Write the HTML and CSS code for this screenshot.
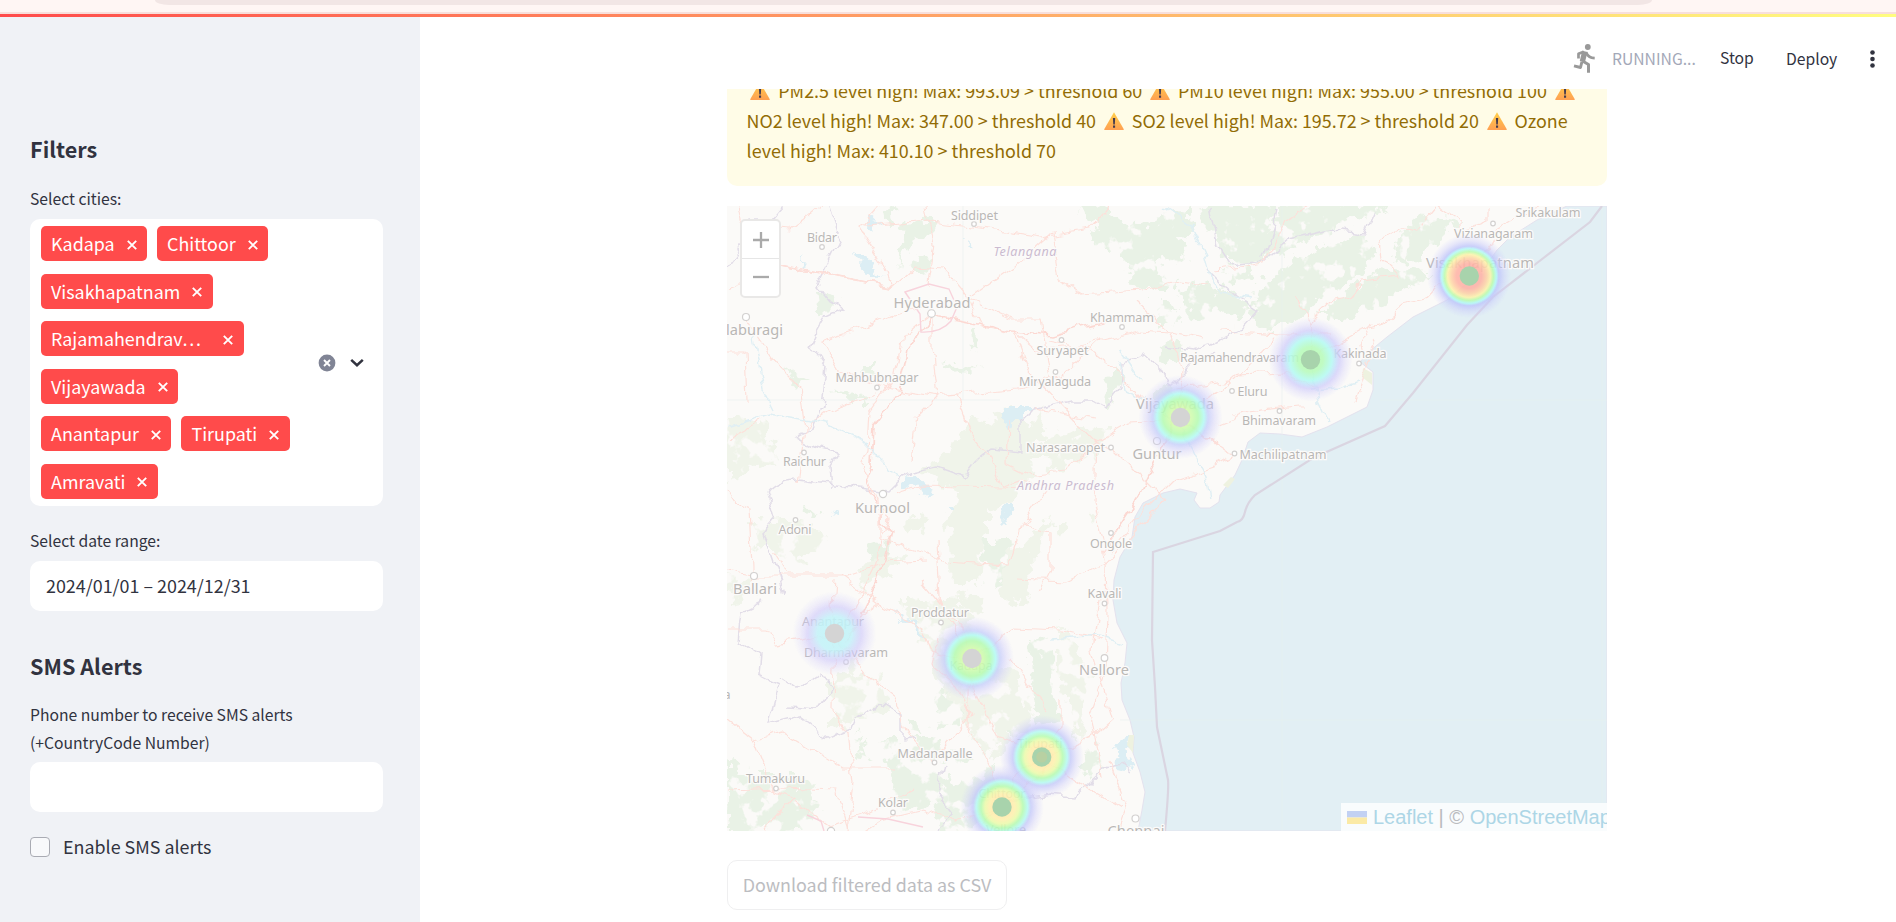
FILE: index.html
```html
<!DOCTYPE html>
<html lang="en">
<head>
<meta charset="utf-8">
<title>Air Quality Dashboard</title>
<link rel="stylesheet" href="styles.css">
</head>
<body>
<svg width="0" height="0" class="defs">
  <symbol id="x" viewBox="0 0 10 10"><path d="M.8.8l8.4 8.4M9.2.8L.8 9.2" stroke="currentColor" stroke-width="1.9" fill="none"/></symbol>
  <symbol id="warn" viewBox="0 0 20 18"><defs><linearGradient id="wg" x1="0" y1="0" x2="0" y2="1"><stop offset="0" stop-color="#ffcf4a"/><stop offset="1" stop-color="#ffa052"/></linearGradient></defs><path d="M10 .3L19.8 17.3Q20 18 19.2 18H.8Q0 18 .2 17.3Z" fill="url(#wg)"/><path d="M8.9 6h2.3l-.4 6.4H9.3zM9 13.6h2.1v2.2H9z" fill="#453b4e"/></symbol>
</svg>
<div class="chrome"><div class="omnibox"></div></div>
<div class="progress"></div>
<div class="app">
  <aside class="sidebar">
    <h2 class="heading">Filters</h2>
    <label class="label">Select cities:</label>
    <div class="select">
      <div class="tags">
        <span class="tag">Kadapa<svg class="x"><use href="#x"/></svg></span>
        <span class="tag">Chittoor<svg class="x"><use href="#x"/></svg></span>
        <span class="tag">Visakhapatnam<svg class="x"><use href="#x"/></svg></span>
        <span class="tag tag-long">Rajamahendrav…<svg class="x"><use href="#x"/></svg></span>
        <span class="tag">Vijayawada<svg class="x"><use href="#x"/></svg></span>
        <span class="tag">Anantapur<svg class="x"><use href="#x"/></svg></span>
        <span class="tag">Tirupati<svg class="x"><use href="#x"/></svg></span>
        <span class="tag">Amravati<svg class="x"><use href="#x"/></svg></span>
      </div>
      <div class="controls">
        <svg width="18" height="18" viewBox="0 0 18 18"><circle cx="9" cy="9" r="8.4" fill="#808495"/><path d="M6 6l6 6M12 6l-6 6" stroke="#fff" stroke-width="1.9"/></svg>
        <svg width="14" height="10" viewBox="0 0 14 10"><path d="M1.2 1.800L7 7.200l5.800-5.400" fill="none" stroke="#31333f" stroke-width="2.500"/></svg>
      </div>
    </div>
    <label class="label label-date">Select date range:</label>
    <div class="input">2024/01/01 – 2024/12/31</div>
    <h2 class="heading heading-sms">SMS Alerts</h2>
    <label class="label label-phone">Phone number to receive SMS alerts (+CountryCode Number)</label>
    <div class="input"></div>
    <div class="check"><span class="box"></span>Enable SMS alerts</div>
  </aside>
  <main class="main">
    <header class="toolbar">
      <svg class="runner" width="23" height="30" viewBox="0 0 23 30" fill="none" stroke="#999" stroke-linejoin="round"><circle cx="14.800" cy="3" r="2.900" fill="#999" stroke="none"/><path d="M5.500 14.500V9.800L10.800 7.700" stroke-width="2.700"/><path d="M11.800 7.400L9.400 17.500" stroke-width="5.400"/><path d="M13 8.200C14.500 12 17 14 21.700 14.200" stroke-width="2.800"/><path d="M9.500 17L15.500 20.500V28.800" stroke-width="3"/><path d="M9 17.500L7.500 23.500L1 21.800" stroke-width="2.900"/></svg>
      <span class="running">RUNNING...</span>
      <span class="stop">Stop</span>
      <span class="deploy">Deploy</span>
      <svg class="kebab" width="5" height="18" viewBox="0 0 5 18" fill="#31333f"><circle cx="2.500" cy="2.500" r="2.300"/><circle cx="2.500" cy="9" r="2.300"/><circle cx="2.500" cy="15.500" r="2.300"/></svg>
    </header>
    <div class="viewport">
      <div class="alert"><svg class="warn"><use href="#warn"/></svg> PM2.5 level high! Max: 993.09 &gt; threshold 60 <svg class="warn"><use href="#warn"/></svg> PM10 level high! Max: 955.00 &gt; threshold 100 <svg class="warn"><use href="#warn"/></svg><br>NO2 level high! Max: 347.00 &gt; threshold 40 <svg class="warn"><use href="#warn"/></svg> SO2 level high! Max: 195.72 &gt; threshold 20 <svg class="warn"><use href="#warn"/></svg> Ozone<br>level high! Max: 410.10 &gt; threshold 70</div>
      <div class="map">
        <svg class="tiles" width="880" height="625" viewBox="727 206 880 625">
          <defs>
            <filter id="rough" x="-5%" y="-5%" width="110%" height="110%" color-interpolation-filters="sRGB"><feTurbulence type="fractalNoise" baseFrequency=".075" numOctaves="3" seed="4"/><feDisplacementMap in="SourceGraphic" scale="26" xChannelSelector="R" yChannelSelector="G" result="d"/><feTurbulence type="fractalNoise" baseFrequency=".05" numOctaves="4" seed="21"/><feColorMatrix values="0 0 0 0 0  0 0 0 0 0  0 0 0 0 0  14 0 0 0 -5.600"/><feComposite in="d" operator="in"/></filter>
            <filter id="hills" x="-5%" y="-5%" width="110%" height="110%" color-interpolation-filters="sRGB"><feTurbulence type="fractalNoise" baseFrequency=".09" numOctaves="3" seed="4"/><feDisplacementMap in="SourceGraphic" scale="24" xChannelSelector="R" yChannelSelector="G" result="d"/><feTurbulence type="fractalNoise" baseFrequency=".05" numOctaves="4" seed="33"/><feColorMatrix values="0 0 0 0 0  0 0 0 0 0  0 0 0 0 0  14 0 0 0 -4.700"/><feComposite in="d" operator="in"/></filter>
            <filter id="edge" x="-5%" y="-5%" width="110%" height="110%" color-interpolation-filters="sRGB"><feTurbulence type="fractalNoise" baseFrequency=".075" numOctaves="3" seed="4"/><feDisplacementMap in="SourceGraphic" scale="22" xChannelSelector="R" yChannelSelector="G"/></filter>
            <filter id="wiggle" x="-5%" y="-5%" width="110%" height="110%" color-interpolation-filters="sRGB"><feTurbulence type="fractalNoise" baseFrequency=".06" numOctaves="3" seed="9"/><feDisplacementMap in="SourceGraphic" scale="12" xChannelSelector="R" yChannelSelector="G"/></filter>
            <radialGradient id="h-red"><stop offset="0" stop-color="#ffaea8"/><stop offset=".3" stop-color="#ffb3a6"/><stop offset=".42" stop-color="#ffd2a8"/><stop offset=".51" stop-color="#fdf3ab"/><stop offset=".58" stop-color="#bdfcae"/><stop offset=".65" stop-color="#b4f9f6"/><stop offset=".71" stop-color="#bfc6fb" stop-opacity=".95"/><stop offset=".84" stop-color="#c6c8fb" stop-opacity=".45"/><stop offset="1" stop-color="#ccf" stop-opacity="0"/></radialGradient>
            <radialGradient id="h-yellow"><stop offset="0" stop-color="#ffe0a8"/><stop offset=".3" stop-color="#fff0ae"/><stop offset=".41" stop-color="#eafbac"/><stop offset=".5" stop-color="#b7fcb2"/><stop offset=".61" stop-color="#b6f9f2"/><stop offset=".69" stop-color="#c3c9fa" stop-opacity=".9"/><stop offset=".83" stop-color="#c9c8fb" stop-opacity=".42"/><stop offset="1" stop-color="#ccf" stop-opacity="0"/></radialGradient>
            <radialGradient id="h-lime"><stop offset="0" stop-color="#eefcae"/><stop offset=".27" stop-color="#cffcae"/><stop offset=".42" stop-color="#b7fcb2"/><stop offset=".56" stop-color="#b4fbf4"/><stop offset=".66" stop-color="#c5cffb" stop-opacity=".9"/><stop offset=".82" stop-color="#cdcafb" stop-opacity=".42"/><stop offset="1" stop-color="#ccf" stop-opacity="0"/></radialGradient>
            <radialGradient id="h-green"><stop offset="0" stop-color="#b9fcae"/><stop offset=".3" stop-color="#b8fcbc"/><stop offset=".5" stop-color="#b4fbf2"/><stop offset=".61" stop-color="#c4dffb" stop-opacity=".92"/><stop offset=".69" stop-color="#cdcafb" stop-opacity=".8"/><stop offset=".84" stop-color="#d0ccfb" stop-opacity=".36"/><stop offset="1" stop-color="#ccf" stop-opacity="0"/></radialGradient>
            <radialGradient id="h-cyan"><stop offset="0" stop-color="#c0f6f8"/><stop offset=".4" stop-color="#c3f3f9"/><stop offset=".53" stop-color="#cddffa" stop-opacity=".9"/><stop offset=".64" stop-color="#d0cbfb" stop-opacity=".75"/><stop offset=".82" stop-color="#d3cdfb" stop-opacity=".32"/><stop offset="1" stop-color="#ccf" stop-opacity="0"/></radialGradient>
          </defs>
          <rect x="727" y="206" width="880" height="625" fill="#fbfaf8"/>
          <g filter="url(#hills)" fill="#e9f2e6">
            <g transform="translate(1160 200) scale(.3333)">
              <path d="M120 10H350L330 90 300 180 180 180 170 110 130 70ZM360 10H700L610 60 580 50 480 120 400 130 320 180 300 120 350 90Z"/>
              <path d="M190 195L270 190 280 230 220 245ZM300 250L400 190 500 130 620 110 650 150 620 200 560 250 470 300 400 370 300 385 280 340Z"/>
              <path d="M480 340L540 290 660 210 820 220 740 270 640 320 560 360ZM720 100L800 40 900 60 850 110 760 190 700 180Z"/>
              <path d="M60 270L130 250 200 270 280 330 230 370 180 330 100 370 80 330ZM0 100L60 110 80 160 40 200 0 180ZM0 300L50 320 50 370 0 380Z"/>
            </g>
            <path d="M1093 200l30 22 25 2 42-18v30l-25 14-10 24-25-6-20-20-20-10 8-12-20-12zM1128 264l22 6 30 10-8 10-30 0-12-14z"/>
          </g>
          <g filter="url(#rough)">
            <g fill="#e9f2e6">
              <path d="M1028 640l24-5 6 90-20 8-7-40zM1088 745l14 14-5 18-15-8zM860 680l20 3-3 20-12 6-12-14z"/>
              <path d="M940 690l24 8-3 30-24 2zM910 720l18 15-18-4zM950 750l25 8-15 10zM950 785l45-20 6 22-20 38-38 12-8-22zM728 756l14 10 2 26-16 5zM800 780l16 0-6 24-14-2zM860 735l10 20-12 5zM1008 715l16 18-14 5z"/>
              <path d="M727 775h60l30 30-10 26h-80zM880 740l60 0 10 60-50 10zM980 540l30 0 10 40-30 10z"/>
            </g>
            <g fill="#f0f4ea">
              <path d="M1040 455l35-26 36 0-20 26-36 16zM750 520l60 0 20 20-30 20-40-10zM727 420l40 0 10 40-50 20zM900 600l60 0 30 60 30 60-30 40-40-60z"/>
              <path d="M990 655l36 30 8 50-30 0-18-40zM840 640l20 16-10 20zM830 680l50-10 10 40-60 20z"/>
              <path d="M727 575l25 5 4 20-25-2zM1060 620l30 60-10 60-20-60z"/>
            </g>
          </g>
          <g filter="url(#edge)">
            <g fill="#e9f2e6">
              <path d="M905 222l24-3 8 8-30 20-8 20 3-20zM882 212l8-4 4 18-8 5zM916 256l14 5-8 12-10-5zM815 290l14 6 8 4-14 14-6-4z"/>
              <path d="M865 362l10 0 3 18-12-4zM835 388l20 6 16 7-22 0zM783 365l12 8 14 8-10 4zM942 361l36 10-20 2zM970 330l6 0 4 22-8-5z"/>
              <path d="M1110 378l9-12 3 15-13 25-7-2 5-15zM1160 348l18-10 6 12-15 18-10-6zM1158 389l13-5 2 12-13 10z"/>
              <path d="M868 545l20-3-6 16-12 0zM804 510l12 5-10 4z"/>
              <path d="M1034 655l14-5 3 70-14 6-4-36z"/>
            </g>
            <g fill="#f0f4ea">
              <path d="M922 472l35-28 15-25 40 10 26 18-5 20-18 12 5 20-28 12-48-28z"/>
              <path d="M988 412l26-3 18 18 10-18 6 28-18 12-28-10zM994 458l32-4 8 20-10 12-28-5z"/>
              <path d="M954 492l34 0 0 40-8 20-2 32-26 0-2-42-3-20z"/>
              <path d="M1005 560l24-26 22-15-10 28-13 20 6 30-16 8-16-12zM858 575l18-20 30 3-15 13-22 10-10 10zM905 522l20-4-3 12-13 4z"/>
              <path d="M955 592l24 5 5 18-18-5zM1052 522l12 0-3 12-9-5zM1092 515l6-5-2 12-6 4zM1045 440l40-14 16 4-30 14-18 14-20 0z"/>
            </g>
            <g fill="#dceef4">
              <path d="M869 215l9 3-2 11-8-3zM853 252l12 10 14 11-8 2-16-14zM803 257l4 10-4-3zM1005 410l20 0 0 10-15 6-8-6zM905 476l16 3 14 10-8 6-16-8-10 2zM1008 504l6 0-8 20-3-4zM896 611l15 10 18 18-10-4zM965 240l6 5-5 4zM831 513l5-3-1 5-5 2zM948 504l5 0 0 5-5 0z"/>
              <path d="M1121 736l8-5 5 15-5 15 6 10-16-4-5-23z"/>
            </g>
          </g>
          <path class="sea" d="M1607 206H1567L1537 220 1510 237 1497 250 1483 270 1447 300 1413 317 1387 337 1370 351 1360 362 1373 372 1373 390 1367 407 1347 417 1327 427 1302 437 1280 434 1260 433 1248 442 1242 460 1235 475 1220 495 1219 502 1210 508 1200 508 1194 500 1197 493 1180 489 1163 493 1143 503 1135 517 1132 537 1120 557 1114 580 1113 600 1117 623 1127 643 1125 663 1121 683 1122 700 1130 720 1134 737 1133 753 1140 772 1145 792 1142 810 1138 831H1607Z"/>
          <path d="M1363 368l9 5v12l-10-8zM1223 485l8-8 4 2-7 9zM1129 735l5 0-1 18-6-8z" fill="#eef2e0"/>
          <g class="tileseam"><path d="M1282 206V831M1602 206V831M963 206V400M727 400H1000M1380 400H1607M1120 720H1607"/></g>
          <g class="borders" filter="url(#wiggle)">
            <path d="M782 206l-12 14-20 0-10 30-15 20M830 206l10 30-14 30-10 20 12 14 16 8-18 8-10 18-5 12 15 22-4 38-8 20-18 10 22 12 20 5-8 14 2 22"/>
            <path d="M768 492q8-12 30-12l60 8 30 4 14-14 12-6 22-5 28 10 12-16 15-12 30 3 0-30 10-10 40-10 24 0 10 6 15-20 2-26 22-8 18 15 8 18 25-25 20-10M768 492l8 26-12 14 10 30 10 30M763 600l-20 10-3 30 20 14-2 20 20 10-10 40 30-8 30 22 24-10 5-12 25-12 20 12 0 25 14-2M780 675l20 14 20-16 12 15-14 22-30-2"/>
            <path d="M1210 206l8 40 12 18 36-4 25-22 40-8 34 4 10-22M1278 206l-4 20-10 30M1208 270l20 20 30 20-16 18-30 16-20 6-28-4M945 765l-6 30 14 18-18 18M1000 800l20 0 30-5 25 2 30-28 15-5 10 8"/>
          </g>
          <g class="roads" filter="url(#wiggle)">
            <path class="trunk" d="M780 265l112 22M932 315l-25 36-8 40-25 35-2 40-6 15 15 34 0 8 10 8-12 50-20 40-14 20M932 315l80 16 40 4 66-15M1175 420l42 22M1175 420l-35 74-35 54"/>
            <path d="M780 265l112 22 22-20 30 2 25 30 45-32 38-34M892 287l-10-25-22-34 20-22M926 206l8 38-6 40M738 206l4 20 50 4 30-24M780 265l-20 14-33 12M864 226l66-5 50 6 62 10 48-8 20-23M1053 232l8 48 20 14 60-4 30-8 36 4M969 299l42 20 30 0 10 60M969 299l13 27 32 6 20 18 40-4 66-15 30 2 37 6"/>
            <path d="M932 315l0 35 6 46-60-10-40-15-17-30 46-15 22-10 42-12M927 316l-24 20-8 40-25 35-2 40-6 15 15 34 0 8 10 8-12 50-20 40-14 20M938 396l18-2 14 40 20 24 12 30 30 2M938 396l-22 22-6 44M938 396l80-8 42-10 40-38"/>
            <path d="M746 318l34 50 20 20 6 40-8 55M727 352l18 0 2 50M727 440l36-20M727 490l8 12 14 6 4 82M727 570l30 6 50 0 38 0 40-14 40-2M806 427l20-15 50-18M896 494l26-8 78 2 22-8 26 10-26 36-14 40-60-4-30-10-38-12 0-30M936 540l3 60 20 40 10 26-2 60 15 25 14 28"/>
            <path d="M1014 332l15 40 35 36 32 34-2 60 12 60 1 50-2 60-14 40 12 66M1096 442l35-20 28-2M1096 442l-30 28-40 4-20-10 2-45M1096 442l20 10 50 50M1106 564l60-65M1096 420l-60-10M1048 340l40 8 28 22 20 22 20 20 20 10M1022 526l28 6 0 40-10 20M1106 564l-40 18-50-2"/>
            <path d="M1175 420l42 22 17 12-20 12-40 14-30 30-35 44M1175 420l8-50-15-40-32-30M1200 400l18-8 18-16 50-2 28 14M1217 424l30-12 50-6 8 0M1310 362l20-15 28-16 25-8 20-18 22-5 22-24 25-30M1310 362l-1-40-14-26M1220 331l60 4 50 0M1175 390l60-10 40-42M1365 365l-5-18 12-24M1355 400l20-60"/>
            <path d="M1469 275l20-30 8-16 24-14 30-9M1440 206l20 14 0 12 28-10 0-16M1378 242l24-14 15 2 20-24M1378 242l2 14 20 20-40 4-6 16M1310 322l20-20 20-4 12-14M1215 270l50-8 20-40 24-16"/>
            <path d="M834 580l-2 28 3 26-2 74 15 24 5 50-5 50M835 634l-58 10-10-14-40 0M835 634l44-30-40-30-50 0-14-22M835 634l30 40 30 24 14 40 26 25M879 604l20 10 24 18 10 20 26 8 40 78 40 12M920 580l25 30 18 20 10 30M940 635l-8 30 24 20 14 30-30 36M972 658l40-30 50 2 40 10M1012 660l20 30 15 20M1060 700l0 30-18 28 50-20 20-18-20-70 8-50"/>
            <path d="M727 720l26 20 20 50 20 8-30 33M753 740l30-8 60 36 50 0M727 790l50-2 60 2 15 50 30-20 40-10 35 10 50-14 25-25 20-20M793 798l36 28 34-12 50-26M1042 758l-26 18-14 28-20 20M1042 758l30 20 50 30M1110 760l18 50-8 20"/>
          </g>
          <path d="M905 292l24-8 20 5 8 18-6 14q-10 12-30 11l-1-18zM807 815l14 6 3 10M858 817l30 2 35 8" fill="none" stroke="#f8d3dc" stroke-width="1.400"/>
          <g class="rivers" filter="url(#wiggle)"><path d="M1165 206l26 18 14 30 8 30 10 10 30 4M727 428l42-14 60 10 30 14 30 30 10 10M1050 640l50-4 25 8M1120 360l5 30 30 14 30 30 20 40 4 24M1310 362l8 40 10 22M1310 390l28-2 20-6M753 330l10 60 10 20M1120 350l20 30"/></g>
          <path class="maritime" d="M1602 206l-12 16-53 41-44 34-26 28-54 68-28 33-72 32-58 37q-8 8-10 17t-8 10l-17 9-67 21-1 88 3 47 2 40 11 53q1 8-3 51"/>
          <g class="towns"><circle cx="822" cy="247" r="2.300"/><circle cx="974" cy="224" r="2.300"/><circle cx="746" cy="317" r="3.500"/><circle cx="931.500" cy="313.500" r="3.800"/><circle cx="1122" cy="327" r="2.300"/><circle cx="1061.500" cy="340" r="2.300"/><circle cx="1055.500" cy="372" r="2.300"/><circle cx="877" cy="387.500" r="2.300"/><circle cx="804" cy="452.500" r="2.300"/><circle cx="883" cy="494" r="3.600"/><circle cx="795.500" cy="520" r="2.300"/><circle cx="754" cy="576" r="3.500"/><circle cx="1111" cy="447.500" r="2.300"/><circle cx="1157" cy="441" r="3.500"/><circle cx="1111" cy="533" r="2.300"/><circle cx="1104.500" cy="603.500" r="2.300"/><circle cx="1104.500" cy="658" r="3.300"/><circle cx="1493" cy="223.500" r="2.300"/><circle cx="1359" cy="363.500" r="2.300"/><circle cx="1232" cy="391" r="2.300"/><circle cx="1279.500" cy="411" r="2.300"/><circle cx="1234.500" cy="453.500" r="2.300"/><circle cx="941" cy="622.500" r="2.300"/><circle cx="846" cy="662" r="2.300"/><circle cx="934.500" cy="762.500" r="2.300"/><circle cx="893" cy="812.500" r="2.300"/><circle cx="776" cy="788.500" r="2.300"/><circle cx="831" cy="831" r="3.600"/><circle cx="1135.500" cy="818.500" r="3.500"/></g>
          <g class="names">
            <text x="974.500" y="220" textLength="47">Siddipet</text><text x="822" y="242" textLength="30">Bidar</text><text x="1122" y="322" textLength="64">Khammam</text><text x="1062.500" y="354.500" textLength="52">Suryapet</text><text x="1055" y="386" textLength="72">Miryalaguda</text><text x="877" y="382" textLength="83">Mahbubnagar</text><text x="804.500" y="465.500" textLength="43">Raichur</text><text x="795" y="534" textLength="33">Adoni</text><text x="1065.500" y="451.500" textLength="79">Narasaraopet</text><text x="1111" y="548" textLength="42">Ongole</text><text x="1104.500" y="598" textLength="34">Kavali</text><text x="1548" y="216.500" textLength="65">Srikakulam</text><text x="1493.500" y="238" textLength="79">Vizianagaram</text><text x="1360" y="358" textLength="53">Kakinada</text><text x="1239.500" y="362" textLength="119">Rajamahendravaram</text><text x="1252.500" y="395.500" textLength="30">Eluru</text><text x="1279" y="425" textLength="74">Bhimavaram</text><text x="1283" y="458.500" textLength="87">Machilipatnam</text><text x="940" y="617" textLength="58">Proddatur</text><text x="833" y="626" textLength="62">Anantapur</text><text x="846" y="657" textLength="84">Dharmavaram</text><text x="971" y="669.500" textLength="43">Kadapa</text><text x="1040" y="748" textLength="45">Tirupati</text><text x="935" y="758" textLength="75">Madanapalle</text><text x="775.500" y="783" textLength="59">Tumakuru</text><text x="893" y="807" textLength="30">Kolar</text><text x="1002" y="797.500" textLength="47">Chittoor</text><text x="1006" y="834" textLength="40">Vellore</text><text x="727" y="699">a</text>
            <g class="city"><text x="970.500" y="307.500" textLength="77" class="end">Hyderabad</text><text x="754.500" y="335" textLength="57">laburagi</text><text x="882.500" y="512.500" textLength="55">Kurnool</text><text x="755" y="593.500" textLength="44">Ballari</text><text x="1157" y="458.500" textLength="49">Guntur</text><text x="1175" y="408.500" textLength="78">Vijayawada</text><text x="1480" y="267.500" textLength="108">Visakhapatnam</text><text x="1104" y="675" textLength="50">Nellore</text><text x="1136" y="835.500" textLength="57">Chennai</text></g>
            <g class="state"><text x="1025" y="256" textLength="63">Telangana</text><text x="1065.500" y="490" textLength="97">Andhra Pradesh</text></g>
          </g>
          <g class="heat"><circle cx="1469" cy="276" r="42" fill="url(#h-red)"/><circle cx="1310.500" cy="359.500" r="42" fill="url(#h-green)"/><circle cx="1180.500" cy="417" r="42" fill="url(#h-lime)"/><circle cx="834.500" cy="633.500" r="42" fill="url(#h-cyan)"/><circle cx="972" cy="658.500" r="42" fill="url(#h-lime)"/><circle cx="1041.700" cy="757" r="42" fill="url(#h-yellow)"/><circle cx="1002" cy="807" r="42" fill="url(#h-yellow)"/></g>
          <g fill="#a8d3ac"><circle cx="1469.300" cy="276" r="9.700"/><circle cx="1310.500" cy="359.700" r="9.700"/><circle cx="1041.700" cy="757" r="9.700"/><circle cx="1002" cy="807" r="9.700"/></g>
          <g fill="#d4d4d4"><circle cx="1180.500" cy="417.500" r="9.700"/><circle cx="834.500" cy="633.500" r="9.700"/><circle cx="972" cy="658.500" r="9.700"/></g>
          <circle cx="1041.700" cy="757" r="5.500" fill="#b8d0a2"/>
        </svg>
        <div class="zoomer"><span class="zoom-btn"><svg width="16" height="16" viewBox="0 0 16 16"><path d="M8 0v16M0 8h16" stroke="#aaa" stroke-width="2.300"/></svg></span><span class="zoom-btn"><svg width="16" height="16" viewBox="0 0 16 16"><path d="M0 7h16" stroke="#aaa" stroke-width="2.300"/></svg></span></div>
        <div class="credit"><svg width="20" height="13" viewBox="0 0 20 13"><path d="M0 0h20v6.500H0z" fill="#c2d1f3"/><path d="M0 6.500h20V13H0z" fill="#fbeaa6"/></svg><a>Leaflet</a> | © <a>OpenStreetMap</a></div>
      </div>
      <div class="download">Download filtered data as CSV</div>
    </div>
  </main>
</div>
</body>
</html>
```
FILE: styles.css
```css
* { box-sizing: border-box; }
body {
  margin: 0;
  width: 1896px;
  height: 922px;
  overflow: hidden;
  display: flex;
  flex-direction: column;
  background: #fff;
  color: #31333f;
  font: 17.9px/30px "Noto Sans CJK SC", "Noto Sans", sans-serif;
}
svg { flex: none; }
.defs { position: absolute; }
.chrome { height: 14px; flex: none; background: #fff6f4; border-bottom: 2px solid #f8dfdb; }
.omnibox { margin-left: 155px; width: 1497px; height: 5px; background: #f2e6e5; border-radius: 0 0 14px 14px / 0 0 5px 5px; }
.progress { height: 3px; flex: none; background: linear-gradient(90deg, #ff4b4b, #fffd80); }
.app { flex: 1; display: flex; min-height: 0; }
.sidebar { width: 420px; flex: none; background: #f0f2f6; padding: 115px 37px 0 30px; }
.heading { margin: 0; height: 36px; font-size: 21.6px; line-height: 33px; font-weight: 600; }
.label { display: block; font-size: 15.7px; line-height: 28px; margin-top: 17px; height: 34px; }
.select { width: 353px; height: 287px; background: #fff; border-radius: 10px; display: flex; padding: 7px 19px 0 11px; }
.tags { width: 260px; display: flex; flex-wrap: wrap; align-content: flex-start; gap: 12.5px 10px; }
.tag { height: 35px; line-height: 35px; border-radius: 5px; background: #ff4b4b; color: #fff; padding: 0 10.4px 0 10px; display: flex; align-items: center; gap: 12px; white-space: nowrap; }
.tag-long { width: 203px; justify-content: space-between; padding-right: 11px; }
.x { width: 10px; height: 10px; margin-top: 2px; }
.controls { flex: 1; height: 274px; display: flex; align-items: center; justify-content: flex-end; gap: 14px; }
.label-date { margin-top: 21px; }
.input { width: 353px; height: 50px; border-radius: 10px; background: #fff; padding: 0 16px; line-height: 49px; }
.heading-sms { margin-top: 38px; }
.label-phone { margin-top: 16px; height: 61px; }
.check { display: flex; align-items: center; gap: 13px; margin-top: 20px; line-height: 29px; }
.box { width: 20px; height: 20px; border: 1px solid #a9abb3; border-radius: 4px; background: #f8f9fb; }
.main { flex: 1; display: flex; flex-direction: column; min-width: 0; }
.toolbar { height: 72px; flex: none; display: flex; align-items: center; justify-content: flex-end; padding: 11px 21px 0 0; font-size: 15.7px; }
.runner { margin: 0 16px 0 0; }
.running { width: 84px; color: #a3a8b8; margin-right: 24px; }
.stop { width: 34px; margin: -2px 32px 0 0; }
.deploy { width: 52px; margin-right: 32px; }
.viewport { flex: 1; min-height: 0; overflow: hidden; padding-left: 307px; }
.alert { width: 880px; height: 130px; margin-top: -33px; padding: 19px 19px 0 19.6px; border-radius: 10px; background: #fffce7; color: #926c05; white-space: nowrap; }
.warn { width: 20px; height: 18px; margin: 0 4px 0 3.7px; vertical-align: -2px; }
.map { position: relative; width: 880px; height: 625px; margin-top: 20px; overflow: hidden; }
.tiles { display: block; }
.sea { fill: #e2eff4; stroke: #e4e2ee; stroke-width: 1; }
.tileseam { fill: none; stroke: #e8f0ee; stroke-width: .6; }
.borders { fill: none; stroke: #e2dde8; stroke-width: 1.5; }
.roads { fill: none; stroke: #fde0da; stroke-width: 1.2; }
.trunk { stroke: #fcd8d2; stroke-width: 1.7; }
.rivers { fill: none; stroke: #dfeff4; stroke-width: 1.4; }
.maritime { fill: none; stroke: #dad5e1; stroke-width: 2.2; }
.towns { fill: #fff; stroke: #d3d1d0; stroke-width: 1.2; }
.names { font: 12.6px "Noto Sans", sans-serif; fill: #b9b7b5; text-anchor: middle; stroke: #fcfbfa; stroke-width: 2.5px; paint-order: stroke; }
.city { font-size: 14.6px; }
.end { text-anchor: end; }
.state { font-style: italic; fill: #cbbbd0; }
.heat { opacity: .87; }
.zoomer { position: absolute; left: 13px; top: 13px; width: 41px; height: 79px; border: 2px solid #e9e8e7; border-radius: 5px; background: #fff; display: flex; flex-direction: column; }
.zoom-btn { flex: 1; display: flex; align-items: center; justify-content: center; }
.zoom-btn + .zoom-btn { border-top: 1px solid #e6e6e6; }
.credit { position: absolute; left: 614px; bottom: 0; height: 28px; padding: 0 6px; background: #f9fcfd; font: 20px/28px "Liberation Sans", sans-serif; color: #b9bbbe; white-space: nowrap; }
.credit a { color: #add6e6; }
.credit svg { margin-right: 6px; }
.download { width: 280px; height: 50px; margin-top: 29px; border: 1px solid #efeff0; border-radius: 10px; color: #bcbdc1; text-align: center; line-height: 47px; white-space: nowrap; }
```
